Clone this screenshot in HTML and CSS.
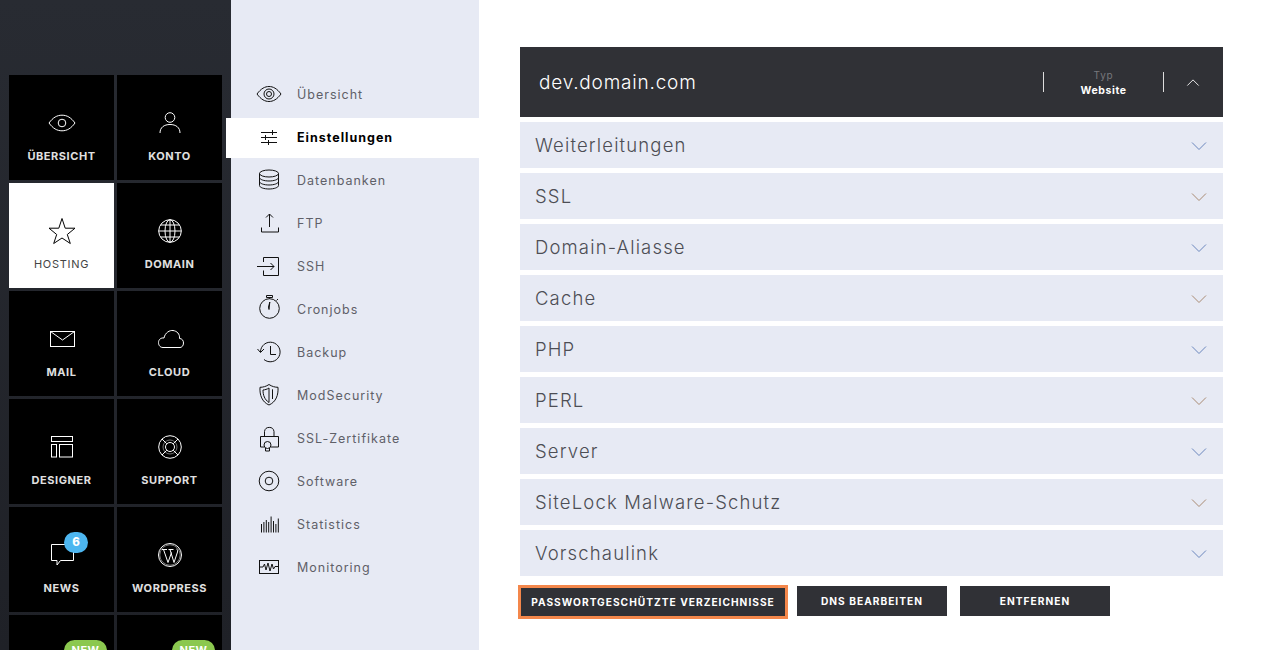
FILE: index.html
```html
<!DOCTYPE html>
<html lang="de">
<head>
<meta charset="utf-8">
<title>Hosting</title>
<link rel="stylesheet" href="styles.css">
</head>
<body>
<div class="page">
  <nav class="sidebar">
    <div class="tiles">
      <a class="tile"><svg class="tile-icon" viewBox="0 0 32 32"><path d="M3 16C7 10.5 11 8.2 16 8.2S25 10.5 29 16C25 21.5 21 23.8 16 23.8S7 21.5 3 16Z"/><circle cx="16" cy="16" r="3.8"/></svg><span class="tile-label">ÜBERSICHT</span></a>
      <a class="tile"><svg class="tile-icon" viewBox="0 0 32 32"><circle cx="16" cy="10.5" r="4.8"/><path d="M6 26C6 20.5 10 17.5 16 17.5S26 20.5 26 26"/></svg><span class="tile-label">KONTO</span></a>
      <a class="tile active"><svg class="tile-icon" viewBox="0 0 32 32"><path d="M16 3.5L19.2 13.2H29L21.3 19.5L24.3 28.5L16 23L7.7 28.5L10.7 19.5L3 13.2H12.8Z"/></svg><span class="tile-label">HOSTING</span></a>
      <a class="tile"><svg class="tile-icon" viewBox="0 0 32 32"><circle cx="16" cy="16" r="11.3"/><ellipse cx="16" cy="16" rx="5" ry="11.3"/><path d="M16 4.7V27.3M4.7 16H27.3M6.5 10H25.5M6.5 22H25.5"/></svg><span class="tile-label">DOMAIN</span></a>
      <a class="tile"><svg class="tile-icon" viewBox="0 0 32 32"><rect x="4.500" y="8.500" width="24" height="15"/><path d="M4.500 8.500L16.500 17L28.500 8.500"/></svg><span class="tile-label">MAIL</span></a>
      <a class="tile"><svg class="tile-icon" viewBox="0 0 32 32"><path d="M9 24.500C5.500 24.500 4.500 21.500 4.500 19.500C4.500 16.500 7 14.500 10 15C11 9.500 16 7 19 7.500C23 8 26 11 25.500 15.500C28 15.500 29.500 17.500 29.500 20C29.500 23 27.500 24.500 26 24.500Z"/></svg><span class="tile-label">CLOUD</span></a>
      <a class="tile"><svg class="tile-icon" viewBox="0 0 32 32"><rect x="5.500" y="5.500" width="21" height="5"/><rect x="5.500" y="13.500" width="5" height="12.500"/><rect x="13.500" y="13.500" width="13" height="12.500"/></svg><span class="tile-label">DESIGNER</span></a>
      <a class="tile"><svg class="tile-icon" viewBox="0 0 32 32"><circle cx="16" cy="16" r="11.300"/><circle cx="16" cy="16" r="4.500"/><path d="M8 8L12.800 12.800M24 8L19.200 12.800M8 24L12.800 19.200M24 24L19.200 19.200"/><circle cx="16" cy="16" r="7" class="faint"/></svg><span class="tile-label">SUPPORT</span></a>
      <a class="tile"><svg class="tile-icon" viewBox="0 0 32 32"><path d="M5.500 5.500H27.500V21.500H14.500L11 26V21.500H5.500Z"/></svg><span class="tile-label">NEWS</span><span class="count">6</span></a>
      <a class="tile"><svg class="tile-icon" viewBox="0 0 32 32"><circle cx="16" cy="16" r="11.500"/><circle cx="16" cy="16" r="10.200" class="faint"/><path d="M8 10.500H13M9.500 10.500L14 23.500L17.500 13.500M14.500 10.500H19.500M16 10.500L20 23.500L23.500 13C24 11.500 23.500 10.500 22.500 10"/></svg><span class="tile-label">WORDPRESS</span></a>
      <a class="tile"><span class="new">NEW</span></a>
      <a class="tile"><span class="new">NEW</span></a>
    </div>
  </nav>
  <aside class="submenu">
    <a class="sub-item"><svg class="sub-icon" viewBox="0 0 32 32"><path d="M4 16C8 10.500 12 8.500 16 8.500S24 10.500 28 16C24 21.500 20 23.500 16 23.500S8 21.500 4 16Z"/><circle cx="16" cy="16" r="5"/><circle cx="16" cy="16" r="2.500"/></svg><span>Übersicht</span></a>
    <a class="sub-item current"><svg class="sub-icon" viewBox="0 0 32 32"><path d="M8 11.500H24M8 16.500H24M8 21.500H24M19.500 9V14M12.500 14V19M15.500 19V24"/></svg><span>Einstellungen</span></a>
    <a class="sub-item"><svg class="sub-icon" viewBox="0 0 32 32"><ellipse cx="16" cy="9.500" rx="9.500" ry="3.500"/><path d="M6.500 9.500V21.500C6.500 23.500 11 25 16 25S25.500 23.500 25.500 21.500V9.500M6.500 13.500C6.500 15.500 11 17 16 17S25.500 15.500 25.500 13.500M6.500 17.500C6.500 19.500 11 21 16 21S25.500 19.500 25.500 17.500"/></svg><span>Datenbanken</span></a>
    <a class="sub-item"><svg class="sub-icon" viewBox="0 0 32 32"><path d="M16.500 7V20M13 10.500L16.500 7L20 10.500M8.500 20.500V25H25.500V20.500"/></svg><span>FTP</span></a>
    <a class="sub-item"><svg class="sub-icon" viewBox="0 0 32 32"><path d="M10.500 12V7.500H25.500V25.500H10.500V20.500M4 16.500H21M17.500 13L21 16.500L17.500 20"/></svg><span>SSH</span></a>
    <a class="sub-item"><svg class="sub-icon" viewBox="0 0 32 32"><circle cx="16.500" cy="15.500" r="9.800"/><path d="M13.500 2.500H19.500V4.500H13.500ZM16.500 4.500V5.700M23.500 7.500L25 6M16.800 9L16 16.500L15.500 14Z"/></svg><span>Cronjobs</span></a>
    <a class="sub-item"><svg class="sub-icon" viewBox="0 0 32 32"><path d="M7.500 16A9.800 9.800 0 1 1 11 23.500M4.500 13L7.500 16.500L11 13M17.500 10V18.500H23"/></svg><span>Backup</span></a>
    <a class="sub-item"><svg class="sub-icon" viewBox="0 0 32 32"><path d="M16 5.500C19 7.500 22 8.300 25 8.300C25.500 16 23 23 16 26C9 23 6.500 16 7 8.300C10 8.300 13 7.500 16 5.500Z"/><path d="M16 9C14 10.300 12 10.800 10 11C10 16 11.500 20.500 16 23.500ZM19.500 10.300V20"/></svg><span>ModSecurity</span></a>
    <a class="sub-item"><svg class="sub-icon" viewBox="0 0 32 32"><path d="M11.500 14V9.500A4.800 4.800 0 0 1 21 9.500V14M11 25H7.500V14.500H25.500V25H18"/><circle cx="14.500" cy="23" r="3.500"/><path d="M12.500 26V29H16.500V26"/></svg><span>SSL-Zertifikate</span></a>
    <a class="sub-item"><svg class="sub-icon" viewBox="0 0 32 32"><circle cx="16" cy="16" r="9.800"/><circle cx="16" cy="16" r="3.800"/></svg><span>Software</span></a>
    <a class="sub-item"><svg class="sub-icon" viewBox="0 0 32 32"><path d="M8.500 24.500V16M10.900 24.500V14M13.300 24.500V12M15.700 24.500V14M18.100 24.500V8.500M20.500 24.500V13M22.900 24.500V16M25.300 24.500V10.500"/></svg><span>Statistics</span></a>
    <a class="sub-item"><svg class="sub-icon" viewBox="0 0 32 32"><rect x="6.500" y="9.500" width="19" height="13"/><path d="M6.500 16H10L11.500 13L13 19L15 12L17 20L19 13L20.500 18L22 15.500H25.500"/></svg><span>Monitoring</span></a>
  </aside>
  <main class="content">
    <header class="panel-head">
      <h1 class="domain">dev.domain.com</h1>
      <div class="type"><span class="type-key">Typ</span><strong class="type-value">Website</strong></div>
      <svg class="chev up" viewBox="0 0 16 10"><path d="M1.500 8.500L8 2L14.500 8.500"/></svg>
    </header>
    <div class="rows">
      <div class="row"><span>Weiterleitungen</span><svg class="chev blue" viewBox="0 0 16 10"><path d="M1 1.500L8 8.500L15 1.500"/></svg></div>
      <div class="row"><span>SSL</span><svg class="chev tan" viewBox="0 0 16 10"><path d="M1 1.500L8 8.500L15 1.500"/></svg></div>
      <div class="row"><span>Domain-Aliasse</span><svg class="chev blue" viewBox="0 0 16 10"><path d="M1 1.500L8 8.500L15 1.500"/></svg></div>
      <div class="row"><span>Cache</span><svg class="chev tan" viewBox="0 0 16 10"><path d="M1 1.500L8 8.500L15 1.500"/></svg></div>
      <div class="row"><span>PHP</span><svg class="chev blue" viewBox="0 0 16 10"><path d="M1 1.500L8 8.500L15 1.500"/></svg></div>
      <div class="row"><span>PERL</span><svg class="chev tan" viewBox="0 0 16 10"><path d="M1 1.500L8 8.500L15 1.500"/></svg></div>
      <div class="row"><span>Server</span><svg class="chev blue" viewBox="0 0 16 10"><path d="M1 1.500L8 8.500L15 1.500"/></svg></div>
      <div class="row"><span>SiteLock Malware-Schutz</span><svg class="chev tan" viewBox="0 0 16 10"><path d="M1 1.500L8 8.500L15 1.500"/></svg></div>
      <div class="row"><span>Vorschaulink</span><svg class="chev blue" viewBox="0 0 16 10"><path d="M1 1.500L8 8.500L15 1.500"/></svg></div>
    </div>
    <div class="actions">
      <button class="btn focus">PASSWORTGESCHÜTZTE VERZEICHNISSE</button>
      <button class="btn">DNS BEARBEITEN</button>
      <button class="btn">ENTFERNEN</button>
    </div>
  </main>
</div>
</body>
</html>
```
FILE: styles.css
```css
* { box-sizing: border-box; }
html, body { margin: 0; height: 100%; overflow: hidden; background: #fff; }
body { font-family: Inter, "Liberation Sans", sans-serif; }
.page { display: flex; height: 650px; overflow: hidden; }

.sidebar { width: 231px; flex: none; background: linear-gradient(#282b32, #1f2127); padding: 75px 9px 0; }
.tiles { display: grid; grid-template-columns: 105px 105px; grid-auto-rows: 105px; gap: 3px; }
.tile { position: relative; display: flex; flex-direction: column; align-items: center; background: #000; color: #e0e0e0; padding-top: 32px; }
.tile.active { background: #fff; color: #444; }
.tile-icon { width: 32px; height: 32px; fill: none; stroke: #fff; stroke-width: 1; display: block; }
.tile.active .tile-icon { stroke: #000; }
.tile-icon .faint { stroke-opacity: .45; }
.tile-label { margin-top: 10px; font-size: 11px; line-height: 14px; font-weight: 700; letter-spacing: .55px; white-space: nowrap; }
.tile.active .tile-label { font-weight: 400; letter-spacing: .7px; }
.count { position: absolute; left: 55px; top: 25px; width: 24px; height: 21px; border-radius: 11px; background: #4db6f0; color: #fff; font-size: 11.500px; font-weight: 800; line-height: 21px; text-align: center; }
.new { position: absolute; left: 55px; top: 25px; width: 43px; height: 21px; border-radius: 11px; background: #8bc84f; color: #fff; font-size: 11px; font-weight: 700; line-height: 21px; text-align: center; letter-spacing: .5px; }

.submenu { width: 248px; flex: none; background: #e7eaf4; padding-top: 75px; }
.sub-item { display: flex; align-items: center; gap: 12px; height: 40px; margin-bottom: 3px; padding: 0 0 2px 22px; color: #5f6068; font-size: 12.500px; letter-spacing: 1px; }
.sub-item.current { margin-left: -5px; padding-left: 27px; background: #fff; color: #000; font-weight: 700; }
.sub-icon { width: 32px; height: 32px; flex: none; fill: none; stroke: #111; stroke-width: 1; }

.content { flex: 1; padding: 47px 39px 0 41px; min-width: 0; }
.panel-head { display: flex; align-items: center; height: 70px; background: #303136; padding: 0 23px 0 19px; color: #fff; }
.domain { flex: 1; margin: 0; font-size: 19px; font-weight: 300; letter-spacing: .8px; }
.type { display: flex; flex-direction: column; align-items: center; justify-content: center; width: 121px; height: 20px; padding-top: 2px; border-left: 1px solid #ddd; border-right: 1px solid #ddd; line-height: 14px; }
.type-key { font-size: 10px; letter-spacing: .8px; color: #77777c; }
.type-value { margin-top: 2px; font-size: 10.500px; font-weight: 700; letter-spacing: .6px; color: #fff; }
.chev { width: 14px; height: 9px; fill: none; stroke-width: 1; display: block; flex: none; }
.chev.up { stroke: #fff; margin-left: 22px; }
.rows { display: flex; flex-direction: column; gap: 5px; margin-top: 5px; }
.row { display: flex; justify-content: space-between; align-items: center; height: 46px; background: #e7eaf4; padding: 0 16px 0 15px; color: #4d4e55; font-size: 18.500px; font-weight: 300; letter-spacing: 1.150px; }
.row .chev { width: 16px; height: 10px; margin-top: 2px; }
.chev.blue { stroke: #6a86bd; }
.chev.tan { stroke: #a98a72; }
.actions { display: flex; align-items: flex-start; margin-top: 10px; }
.btn { height: 30px; width: 150px; margin-right: 13px; border: 0; background: #303136; color: #fff; font-family: inherit; font-size: 10.200px; font-weight: 700; letter-spacing: 1px; padding: 0; white-space: nowrap; }
.btn.focus { width: 264px; height: 28px; margin: 2px 12px 0 1px; outline: 3px solid #f4874b; }
```
